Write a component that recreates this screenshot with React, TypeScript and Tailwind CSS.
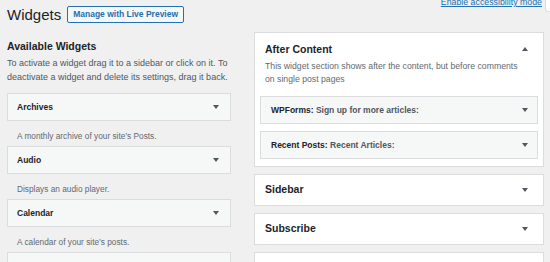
import React from "react";

function Arrow({ up = false }: { up?: boolean }) {
  return (
    <svg width="6" height="4" viewBox="0 0 6 4" className="shrink-0 fill-[#50575e]">
      {up ? <path d="M0 4L3 0L6 4Z" /> : <path d="M0 0L6 0L3 4Z" />}
    </svg>
  );
}

function WidgetItem({ title, desc }: { title: string; desc: string }) {
  return (
    <div>
      <div className="flex h-[28px] items-center justify-between border border-[#dcdcde] bg-[#f6f7f7] pl-[9px] pr-[11px]">
        <span className="text-[8.5px] font-bold text-[#1d2327]">{title}</span>
        <Arrow />
      </div>
      <p className="pl-[10px] pt-[8px] pb-[3px] text-[8.3px] leading-[14px] text-[#646970]">{desc}</p>
    </div>
  );
}

function InnerWidget({ name, title }: { name: string; title: string }) {
  return (
    <div className="flex h-[28px] items-center justify-between border border-[#dcdcde] bg-[#f6f7f7] pl-[10px] pr-[9px]">
      <span className="text-[8.5px] font-bold text-[#1d2327]">
        {name}: <span className="text-[#50575e]">{title}</span>
      </span>
      <Arrow />
    </div>
  );
}

function SidebarBox({ name }: { name: string }) {
  return (
    <div className="flex h-[32px] items-center justify-between border border-[#dcdcde] bg-white pl-[10px] pr-[15px]">
      <h2 className="text-[10.5px] font-bold text-[#1d2327]">{name}</h2>
      <Arrow />
    </div>
  );
}

export default function App() {
  return (
    <div className="h-[262px] w-[550px] overflow-hidden bg-[#f0f0f1] font-['Liberation_Sans',Arial,sans-serif] text-[#1d2327]">
      {/* Header */}
      <div className="flex h-[32px] items-start pl-[7px]">
        <h1 className="mt-[6px] text-[15px] leading-[17px]">Widgets</h1>
        <button className="ml-[6px] mt-[6px] h-[17px] rounded-[2px] border border-[#2271b1] bg-[#f6f7f7] px-[5px] text-[8.5px] font-bold text-[#2271b1]">
          Manage with Live Preview
        </button>
        <a className="ml-auto -mt-[3px] text-[8.8px] leading-[11px] text-[#2271b1] underline">
          Enable accessibility mode
        </a>
        <div className="ml-[3px] h-[12px] w-[5px] rounded-bl-[3px] border-b border-l border-[#dcdcde] bg-white" />
      </div>

      <div className="flex gap-[23px] pl-[7px]">
        {/* Available widgets */}
        <div className="w-[224px] shrink-0 pt-[7px]">
          <h2 className="text-[10.5px] font-bold leading-[14px]">Available Widgets</h2>
          <p className="mt-[3px] text-[9px] leading-[14px] text-[#50575e]">
            To activate a widget drag it to a sidebar or click on it. To deactivate a widget and delete its settings, drag it back.
          </p>
          <div className="mt-[9px]">
            <WidgetItem title="Archives" desc="A monthly archive of your site’s Posts." />
            <WidgetItem title="Audio" desc="Displays an audio player." />
            <WidgetItem title="Calendar" desc="A calendar of your site’s posts." />
            {/* next widget, only its top edge is in view */}
            <div className="h-[28px] border border-[#dcdcde] bg-[#f6f7f7]" />
          </div>
        </div>

        {/* Sidebars */}
        <div className="flex w-[290px] shrink-0 flex-col gap-[7px]">
          <div className="border border-[#dcdcde] bg-white pb-[7px]">
            <div className="flex items-center justify-between pl-[10px] pr-[15px] pt-[9px]">
              <h2 className="text-[10.5px] font-bold leading-[14px]">After Content</h2>
              <Arrow up />
            </div>
            <p className="mt-[4px] pl-[10px] pr-[22px] text-[8.7px] leading-[13px] text-[#646970]">
              This widget section shows after the content, but before comments on single post pages
            </p>
            <div className="mt-[10px] flex flex-col gap-[7px] px-[5px]">
              <InnerWidget name="WPForms" title="Sign up for more articles:" />
              <InnerWidget name="Recent Posts" title="Recent Articles:" />
            </div>
          </div>
          <SidebarBox name="Sidebar" />
          <SidebarBox name="Subscribe" />
          <div className="h-[32px] border border-[#dcdcde] bg-white" />
        </div>
      </div>
    </div>
  );
}
